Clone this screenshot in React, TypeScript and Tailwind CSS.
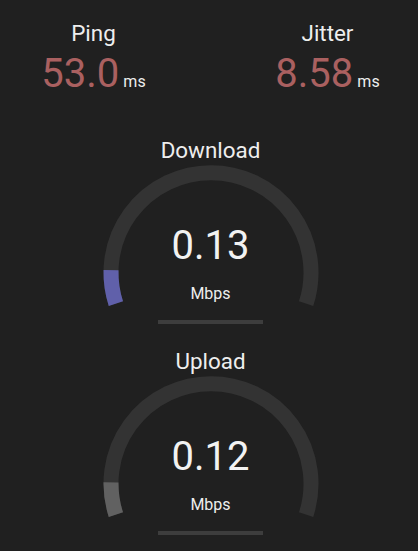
import React from "react";

const CX = 115;
const CY = 110.7;
const R = 100;
const START = -198;
const SPAN = 216;

const pt = (deg: number) => {
  const a = (deg * Math.PI) / 180;
  return `${(CX + R * Math.cos(a)).toFixed(2)} ${(CY + R * Math.sin(a)).toFixed(2)}`;
};

const arcPath = (from: number, to: number) =>
  `M ${pt(from)} A ${R} ${R} 0 ${to - from > 180 ? 1 : 0} 1 ${pt(to)}`;

const Stat = ({ label, value }: { label: string; value: string }) => (
  <div className="w-[160px] flex flex-col items-center">
    <div className="text-[22.4px] leading-[24px] text-[#eeeeee]">{label}</div>
    <div className="mt-[7px] text-[40px] leading-[44px] text-[#aa6060] whitespace-nowrap">
      {value}
      <span className="ml-[4px] text-[16px] leading-none text-[#eeeeee]">ms</span>
    </div>
  </div>
);

const Gauge = ({ label, value, amount, color }: { label: string; value: string; amount: number; color: string }) => (
  <div className="flex flex-col items-center">
    <div className="text-[22.4px] leading-[24px] text-[#eeeeee]">{label}</div>
    <div className="relative w-[230px] h-[158px] flex flex-col items-center pt-[62px]">
      <svg className="absolute inset-0" width="230" height="158" viewBox="0 0 230 158">
        <path d={arcPath(START, START + SPAN)} fill="none" stroke="#333333" strokeWidth="15" />
        <path d={arcPath(START, START + SPAN * amount)} fill="none" stroke={color} strokeWidth="15" />
      </svg>
      <div className="relative text-[40px] leading-[44px] text-[#f2f2f2]">{value}</div>
      <div className="relative mt-[16px] text-[16px] leading-[20px] text-[#eeeeee]">Mbps</div>
    </div>
    <div className="w-[105px] h-[4px] bg-[#3d3d3d]" />
  </div>
);

export default function App() {
  return (
    <div
      className="w-[418px] h-[551px] overflow-hidden bg-[#202020] pl-[3px] pt-[21px] flex flex-col items-center"
      style={{ fontFamily: "Roboto, 'Noto Sans', sans-serif" }}
    >
      <div className="flex gap-[74px]">
        <Stat label="Ping" value="53.0" />
        <Stat label="Jitter" value="8.58" />
      </div>
      <div className="mt-[42px] flex flex-col gap-[25px]">
        <Gauge label="Download" value="0.13" amount={0.0902} color="#6060aa" />
        <Gauge label="Upload" value="0.12" amount={0.0869} color="#616161" />
      </div>
    </div>
  );
}
